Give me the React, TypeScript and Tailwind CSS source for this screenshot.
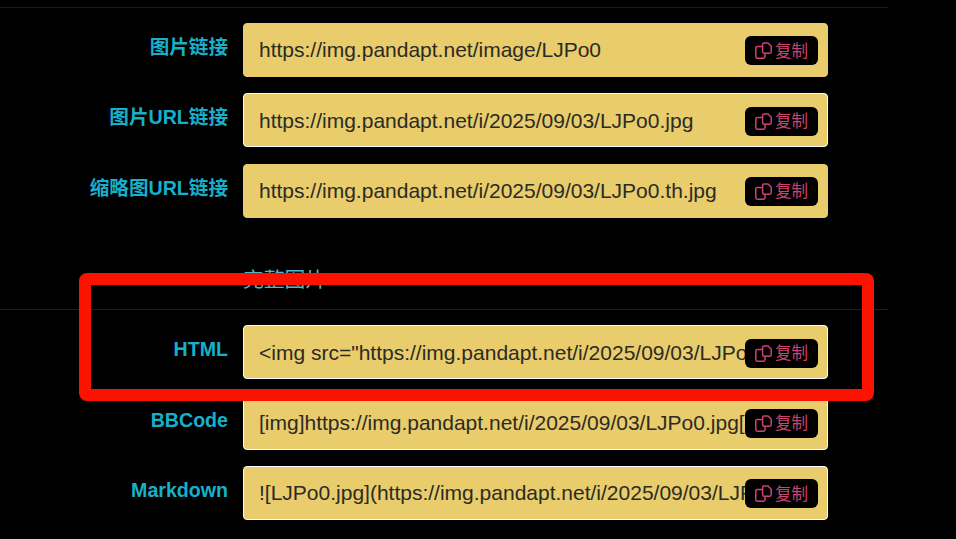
interface RowProps {
	label: string;
	value: string;
	bordered?: boolean;
}

const CopyIcon = () => {
	return (
		<svg width="17" height="17" viewBox="0 0 17 17" fill="none" stroke="currentColor" strokeWidth="1.5" strokeLinejoin="round" className="shrink-0">
			<path d="M9 1h4l3.2 3.2V9.8a1.4 1.4 0 0 1-1.4 1.4H9a1.4 1.4 0 0 1-1.4-1.4V2.4A1.4 1.4 0 0 1 9 1z" />
			<path d="M7.6 4.6H2.2A1.4 1.4 0 0 0 .8 6v8.8a1.4 1.4 0 0 0 1.4 1.4h6.4a1.4 1.4 0 0 0 1.4-1.4v-3.6" />
		</svg>
	);
};

const Row = ({ label, value, bordered }: RowProps) => {
	return (
		<div className="flex items-center h-[54px] mb-[16.4px]">
			<div className="w-[228px] text-right text-[19.6px] leading-[26px] font-bold text-[#17b0cb] -mt-[6px]">{label}</div>
			<div
				className={`relative ml-[15px] w-[585px] h-[54px] rounded-[4px] bg-[#e9cc6b] border flex items-center pl-[15px] ${
					bordered ? 'border-white' : 'border-[#e9cc6b]'
				}`}
			>
				<div className="w-[530px] overflow-hidden text-[21px] text-[#2b2b25] whitespace-nowrap">{value}</div>
				<div className="absolute left-[501px] top-[12.4px] w-[73px] h-[29px] rounded-[6px] bg-black text-[#cc4472] flex items-center justify-center gap-[3px] text-[16.5px]">
					<CopyIcon />
					<span>复制</span>
				</div>
			</div>
		</div>
	);
};

const App = () => {
	return (
		<div className="relative w-[956px] h-[539px] overflow-hidden bg-black font-['Liberation_Sans','Noto_Sans_CJK_SC',sans-serif]">
			<div className="w-[888px] pt-[7px]">
				<div className="h-px bg-[#2c1517] mb-[15px]"></div>
				<Row label="图片链接" value="https://img.pandapt.net/image/LJPo0" />
				<Row label="图片URL链接" value="https://img.pandapt.net/i/2025/09/03/LJPo0.jpg" bordered />
				<Row label="缩略图URL链接" value="https://img.pandapt.net/i/2025/09/03/LJPo0.th.jpg" />
				<div className="ml-[243px] mt-[47px] h-[29px] text-[20.8px] leading-[29px] text-[#4fb7c9]">完整图片</div>
				<div className="h-px bg-[#2c1517] mt-[15.5px] mb-[15px]"></div>
				<Row label="HTML" value={'<img src="https://img.pandapt.net/i/2025/09/03/LJPo0.jpg" alt="LJPo0.jpg" />'} bordered />
				<Row label="BBCode" value="[img]https://img.pandapt.net/i/2025/09/03/LJPo0.jpg[/img]" bordered />
				<Row label="Markdown" value="![LJPo0.jpg](https://img.pandapt.net/i/2025/09/03/LJPo0.jpg)" bordered />
			</div>
			{/* annotation box */}
			<div className="absolute left-[79px] top-[273px] w-[795px] h-[128px] border-[12px] border-[#fb1300] rounded-[8px]"></div>
		</div>
	);
};

export default App;
